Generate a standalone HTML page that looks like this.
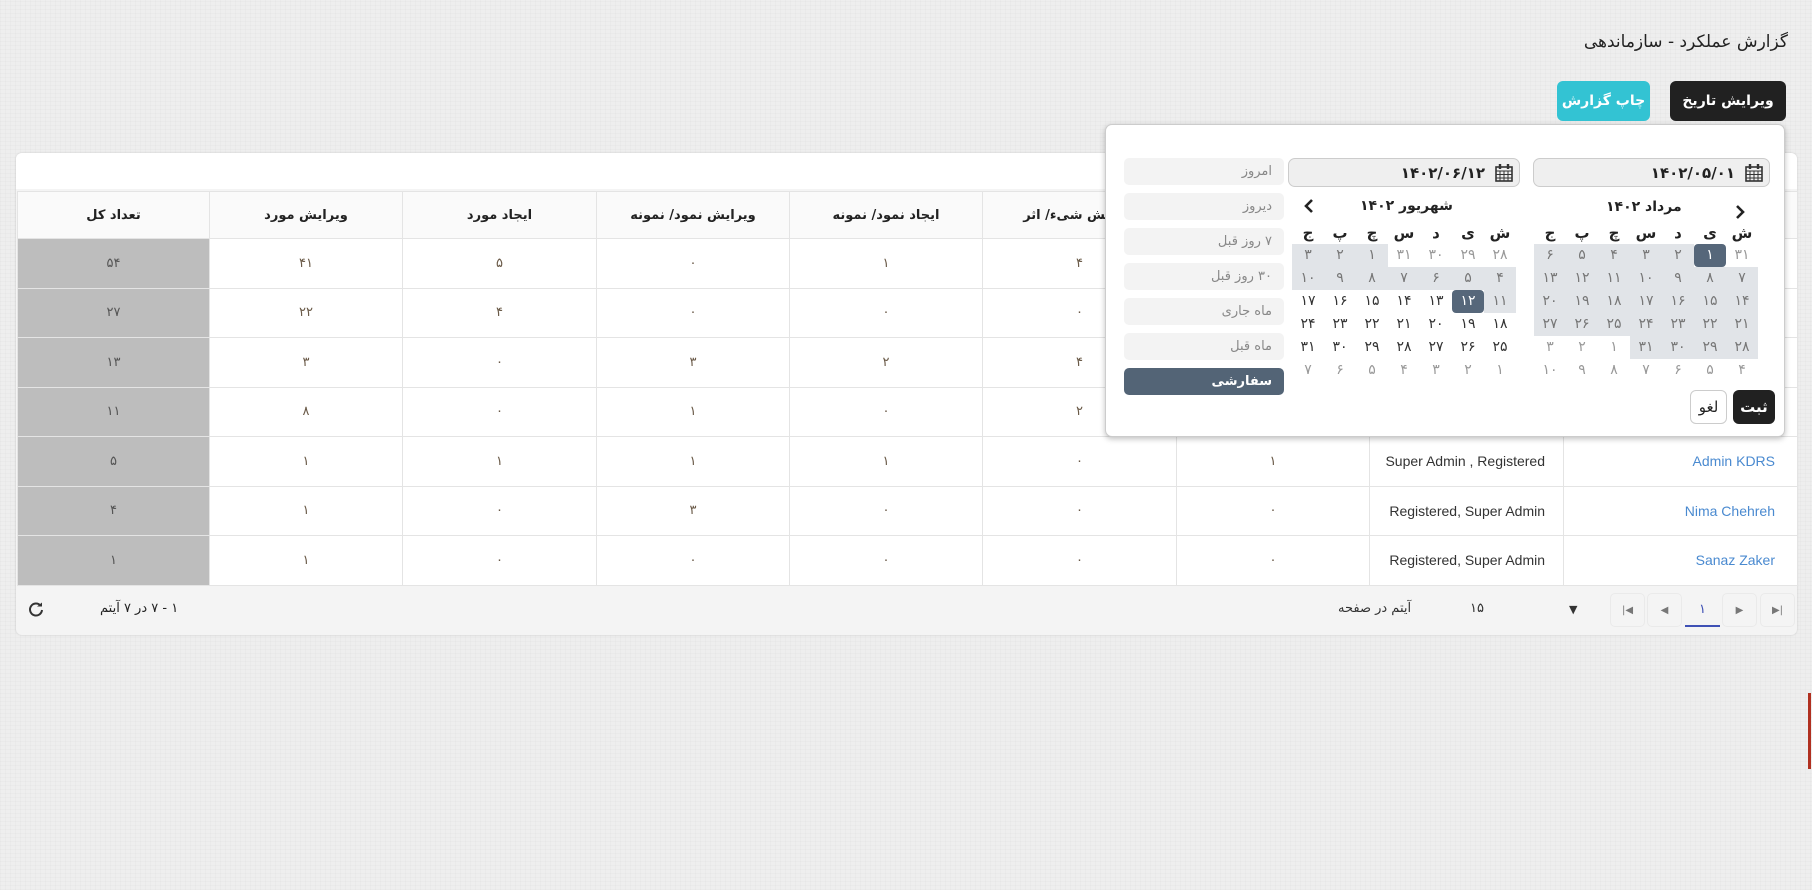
<!DOCTYPE html>
<html lang="fa"><head><meta charset="utf-8">
<style>
*{box-sizing:border-box;margin:0;padding:0}
body{width:1812px;height:890px;overflow:hidden;position:relative;font-family:"DejaVu Sans","Liberation Sans",sans-serif;
background:#eeeeee;background-image:repeating-linear-gradient(0deg,rgba(0,0,0,.015) 0 1px,transparent 1px 4px),repeating-linear-gradient(90deg,rgba(0,0,0,.015) 0 1px,transparent 1px 5px);color:#333}
.a{position:absolute}
.title{right:24px;top:32px;font-size:17px;color:#222;direction:rtl}
.btn{top:81px;height:40px;border-radius:6px;color:#fff;font-size:14px;font-weight:bold;display:flex;align-items:center;justify-content:center;direction:rtl}
.card{left:16px;top:153px;width:1781px;height:482px;background:#f4f4f4;border-radius:6px;box-shadow:0 0 2px rgba(0,0,0,.15)}
.top{left:16px;top:153px;width:1781px;height:36px;background:#fff;border-radius:6px 6px 0 0}
table{position:absolute;left:17px;top:191px;border-collapse:collapse;table-layout:fixed;background:#fff}
td,th{border:1px solid #e4e4e4;text-align:center;font-size:13px;height:49.5px;padding:0}
th{background:#fafafa;height:47px;font-weight:bold;color:#222;direction:rtl;white-space:nowrap;overflow:hidden}
td{color:#6a5a48}
td.g{background:#bdbdbd;color:#555}
td.n{color:#4a8ad0;text-align:right;padding-right:22px;font-family:"Liberation Sans",sans-serif;font-size:14px}
td.rl{color:#333;text-align:right;padding-right:18px;font-family:"Liberation Sans",sans-serif;font-size:14px}
.pg{top:593px;width:35px;height:34px;border-radius:5px;background:#f4f4f4;border:1px solid #eaeaea;font-size:10px;color:#777;display:flex;align-items:center;justify-content:center}
.pop{left:1105px;top:124px;width:680px;height:313px;background:#fff;border:1px solid #ccc;border-radius:7px;box-shadow:0 2px 6px rgba(0,0,0,.25)}
.pre{left:1124px;width:160px;height:27px;background:#f3f3f3;border-radius:5px;font-size:13px;color:#888;direction:rtl;text-align:right;padding-right:12px;line-height:27px}
.inp{top:158px;height:29px;background:#efefef;border:1px solid #ccc;border-radius:7px;direction:rtl;font-weight:bold;font-size:15px;padding-right:34px;line-height:28px;color:#222}
.cal{position:absolute}
.grid{width:224px;display:flex;flex-wrap:wrap;direction:rtl}
.grid div{width:32px;height:23px;text-align:center;font-size:14px;line-height:23px;color:#333}
.grid .w{font-weight:bold;font-size:15px;height:22px;line-height:22px;color:#222}
.grid .o{color:#999}
.grid .r{background:#e1e4e8;color:#777}
.grid .s{background:#56677a;color:#fff;border-radius:4px}
.mh{font-size:14px;font-weight:bold;direction:rtl;color:#222}
</style></head><body>
<div class="a title">گزارش عملکرد - سازماندهی</div>
<div class="a btn" style="left:1670px;width:116px;background:#212121">ویرایش تاریخ</div>
<div class="a btn" style="left:1557px;width:93px;background:#33c3d3">چاپ گزارش</div>

<div class="a card"></div>
<div class="a top"></div>
<table>
<colgroup><col style="width:192px"><col style="width:193px"><col style="width:194px"><col style="width:193px"><col style="width:193px"><col style="width:194px"><col style="width:193px"><col style="width:194px"><col style="width:234px"></colgroup>
<tr><th>تعداد کل</th><th>ویرایش مورد</th><th>ایجاد مورد</th><th>ویرایش نمود/ نمونه</th><th>ایجاد نمود/ نمونه</th><th>ویرایش شیء/ اثر</th><th>ایجاد شیء/ اثر</th><th>نقش</th><th>نام کاربر</th></tr>
<tr><td class="g">۵۴</td><td>۴۱</td><td>۵</td><td>۰</td><td>۱</td><td>۴</td><td>۰</td><td class="rl">Super Admin</td><td class="n">Admin</td></tr>
<tr><td class="g">۲۷</td><td>۲۲</td><td>۴</td><td>۰</td><td>۰</td><td>۰</td><td>۱</td><td class="rl">Registered</td><td class="n">User</td></tr>
<tr><td class="g">۱۳</td><td>۳</td><td>۰</td><td>۳</td><td>۲</td><td>۴</td><td>۱</td><td class="rl">Registered</td><td class="n">User</td></tr>
<tr><td class="g">۱۱</td><td>۸</td><td>۰</td><td>۱</td><td>۰</td><td>۲</td><td>۰</td><td class="rl">Registered</td><td class="n">User</td></tr>
<tr><td class="g">۵</td><td>۱</td><td>۱</td><td>۱</td><td>۱</td><td>۰</td><td>۱</td><td class="rl">Super Admin , Registered</td><td class="n">Admin KDRS</td></tr>
<tr><td class="g">۴</td><td>۱</td><td>۰</td><td>۳</td><td>۰</td><td>۰</td><td>۰</td><td class="rl">Registered, Super Admin</td><td class="n">Nima Chehreh</td></tr>
<tr><td class="g">۱</td><td>۱</td><td>۰</td><td>۰</td><td>۰</td><td>۰</td><td>۰</td><td class="rl">Registered, Super Admin</td><td class="n">Sanaz Zaker</td></tr>
</table>

<svg class="a" style="left:27px;top:601px" width="18" height="18" viewBox="0 0 18 18"><path d="M13.5 4.5A6 6 0 1 0 15 9" fill="none" stroke="#333" stroke-width="2"/><path d="M10 3.5h5v-4z" fill="#333" transform="translate(0,2)"/></svg>
<div class="a" style="left:100px;top:601px;font-size:13px;direction:rtl;color:#222">۱ - ۷ در ۷ آیتم</div>
<div class="a" style="left:1338px;top:601px;font-size:13px;direction:rtl;color:#333">آیتم در صفحه</div>
<div class="a" style="left:1470px;top:601px;font-size:13px;color:#333">۱۵</div>
<div class="a" style="left:1569px;top:603px;font-size:11px;color:#333">▼</div>
<div class="a pg" style="left:1610px">|◀</div>
<div class="a pg" style="left:1647px">◀</div>
<div class="a pg" style="left:1685px;background:#f4f4f4;border:none;border-bottom:2px solid #3f51b5;border-radius:0;color:#3f51b5;font-size:13px">۱</div>
<div class="a pg" style="left:1722px">▶</div>
<div class="a pg" style="left:1760px">▶|</div>

<div class="a" style="left:1808px;top:693px;width:3px;height:76px;background:#b03020"></div>

<div class="a pop"></div>
<div class="a pre" style="top:158px">امروز</div>
<div class="a pre" style="top:193px">دیروز</div>
<div class="a pre" style="top:228px">۷ روز قبل</div>
<div class="a pre" style="top:263px">۳۰ روز قبل</div>
<div class="a pre" style="top:298px">ماه جاری</div>
<div class="a pre" style="top:333px">ماه قبل</div>
<div class="a pre" style="top:368px;background:#536476;color:#fff;font-weight:bold">سفارشی</div>

<div class="a inp" style="left:1533px;width:237px">۱۴۰۲/۰۵/۰۱<svg class="cal" viewBox="0 0 18 18" style="top:5px;width:18px;height:18px;right:6px"><rect x="1" y="3" width="16" height="14" fill="none" stroke="#333" stroke-width="1.6"/><path d="M1 7h16M1 10.5h16M1 14h16M5 7v10M9 7v10M13 7v10" stroke="#333" stroke-width="1"/><path d="M5 0v5M13 0v5" stroke="#333" stroke-width="2.4"/></svg></div>
<div class="a inp" style="left:1288px;width:232px">۱۴۰۲/۰۶/۱۲<svg class="cal" viewBox="0 0 18 18" style="top:5px;width:18px;height:18px;right:6px"><rect x="1" y="3" width="16" height="14" fill="none" stroke="#333" stroke-width="1.6"/><path d="M1 7h16M1 10.5h16M1 14h16M5 7v10M9 7v10M13 7v10" stroke="#333" stroke-width="1"/><path d="M5 0v5M13 0v5" stroke="#333" stroke-width="2.4"/></svg></div>

<div class="a mh" style="left:1606px;top:199px">مرداد ۱۴۰۲</div>
<svg class="a" style="left:1735px;top:205px" width="10" height="14" viewBox="0 0 10 14"><path d="M2 1l6 6-6 6" fill="none" stroke="#222" stroke-width="2.6"/></svg>
<div class="a mh" style="left:1360px;top:198px">شهریور ۱۴۰۲</div>
<svg class="a" style="left:1304px;top:199px" width="10" height="14" viewBox="0 0 10 14"><path d="M8 1L2 7l6 6" fill="none" stroke="#222" stroke-width="2.6"/></svg>

<div class="a grid" style="left:1534px;top:222px">
<div class="w">ش</div><div class="w">ی</div><div class="w">د</div><div class="w">س</div><div class="w">چ</div><div class="w">پ</div><div class="w">ج</div>
<div class="o">۳۱</div><div class="s">۱</div><div class="r">۲</div><div class="r">۳</div><div class="r">۴</div><div class="r">۵</div><div class="r">۶</div>
<div class="r">۷</div><div class="r">۸</div><div class="r">۹</div><div class="r">۱۰</div><div class="r">۱۱</div><div class="r">۱۲</div><div class="r">۱۳</div>
<div class="r">۱۴</div><div class="r">۱۵</div><div class="r">۱۶</div><div class="r">۱۷</div><div class="r">۱۸</div><div class="r">۱۹</div><div class="r">۲۰</div>
<div class="r">۲۱</div><div class="r">۲۲</div><div class="r">۲۳</div><div class="r">۲۴</div><div class="r">۲۵</div><div class="r">۲۶</div><div class="r">۲۷</div>
<div class="r">۲۸</div><div class="r">۲۹</div><div class="r">۳۰</div><div class="r">۳۱</div><div class="o">۱</div><div class="o">۲</div><div class="o">۳</div>
<div class="o">۴</div><div class="o">۵</div><div class="o">۶</div><div class="o">۷</div><div class="o">۸</div><div class="o">۹</div><div class="o">۱۰</div>
</div>

<div class="a grid" style="left:1292px;top:222px">
<div class="w">ش</div><div class="w">ی</div><div class="w">د</div><div class="w">س</div><div class="w">چ</div><div class="w">پ</div><div class="w">ج</div>
<div class="o">۲۸</div><div class="o">۲۹</div><div class="o">۳۰</div><div class="o">۳۱</div><div class="r">۱</div><div class="r">۲</div><div class="r">۳</div>
<div class="r">۴</div><div class="r">۵</div><div class="r">۶</div><div class="r">۷</div><div class="r">۸</div><div class="r">۹</div><div class="r">۱۰</div>
<div class="r">۱۱</div><div class="s">۱۲</div><div>۱۳</div><div>۱۴</div><div>۱۵</div><div>۱۶</div><div>۱۷</div>
<div>۱۸</div><div>۱۹</div><div>۲۰</div><div>۲۱</div><div>۲۲</div><div>۲۳</div><div>۲۴</div>
<div>۲۵</div><div>۲۶</div><div>۲۷</div><div>۲۸</div><div>۲۹</div><div>۳۰</div><div>۳۱</div>
<div class="o">۱</div><div class="o">۲</div><div class="o">۳</div><div class="o">۴</div><div class="o">۵</div><div class="o">۶</div><div class="o">۷</div>
</div>

<div class="a" style="left:1733px;top:390px;width:42px;height:34px;background:#212121;color:#fff;border-radius:6px;font-weight:bold;font-size:15px;text-align:center;line-height:34px">ثبت</div>
<div class="a" style="left:1690px;top:390px;width:37px;height:34px;background:#fff;border:1px solid #ccc;border-radius:6px;font-size:15px;text-align:center;line-height:32px;color:#222">لغو</div>
</body></html>
